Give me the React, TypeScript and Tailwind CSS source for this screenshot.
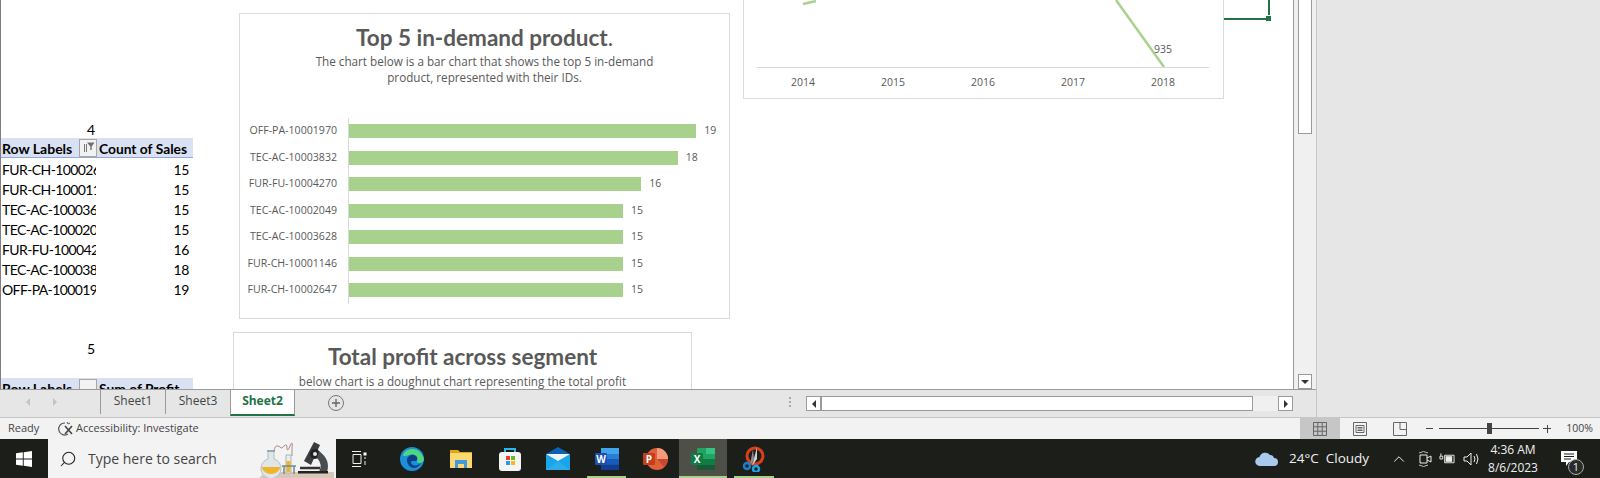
import { Search, ChevronUp } from "lucide-react";

const chartFont = "font-['Lato','Liberation_Sans',sans-serif]";
const uiFont = "font-['Open_Sans','Liberation_Sans',sans-serif]";

const pivotRows = [
  ["FUR-CH-10002647", 15],
  ["FUR-CH-10001146", 15],
  ["TEC-AC-10003628", 15],
  ["TEC-AC-10002049", 15],
  ["FUR-FU-10004270", 16],
  ["TEC-AC-10003832", 18],
  ["OFF-PA-10001970", 19],
] as const;

const barRows = [...pivotRows].reverse();

function FilterButton({ sorted }: { sorted?: boolean }) {
  return (
    <div className="w-[18px] h-[18px] shrink-0 border border-[#a6a6a6] bg-[#f2f2f2] flex items-center justify-center">
      {sorted && (
        <svg width="13" height="13" viewBox="0 0 13 13">
          <path d="M2.500 3v8M4.500 3v8" stroke="#777" strokeWidth="1" fill="none" />
          <path d="M5 1.500h7.500L9.700 5.500V9H8.300V5.500z" fill="#6f6f6f" />
        </svg>
      )}
    </div>
  );
}

function PivotHeader({ value, sorted }: { value: string; sorted?: boolean }) {
  return (
    <div className="flex w-[192px] h-5 items-center bg-[#d9e1f2] border-b border-[#8ea9db] text-[14px] font-bold text-black">
      <span className="w-[78px] pl-[1px] pt-[2px] whitespace-nowrap">Row Labels</span>
      <FilterButton sorted={sorted} />
      <span className="pl-[2px] pt-[2px] whitespace-nowrap text-[13.8px]">{value}</span>
    </div>
  );
}

function PivotTables() {
  return (
    <div className={`${chartFont} pt-[118px] text-[14px] text-black leading-5`}>
      <div className="w-[94px] h-5 pt-[2px] text-right">4</div>
      <PivotHeader value="Count of Sales" sorted />
      {pivotRows.map(([id, count]) => (
        <div key={id} className="flex w-[192px] h-5 pt-[4px] items-center">
          <span className="w-[95px] pl-[1px] overflow-hidden whitespace-nowrap tracking-[-0.6px]">{id}</span>
          <span className="flex-1 text-right pr-[4px] tracking-[-0.4px]">{count}</span>
        </div>
      ))}
      <div className="h-10" />
      <div className="w-[94px] h-5 pt-[1px] text-right">5</div>
      <div className="h-5" />
      <PivotHeader value="Sum of Profit" />
    </div>
  );
}

function BarCard() {
  return (
    <div className={`${chartFont} absolute left-[239px] top-[13px] w-[491px] h-[306px] border border-[#d9d9d9] bg-white text-[#595959] flex flex-col items-center`}>
      <h2 className="mt-[8px] text-[22.5px] leading-[32px] font-bold">
        Top 5 in-demand product<span className="font-normal">.</span>
      </h2>
      <p className={`${uiFont} text-[11.7px] leading-[16px] text-center w-[360px] -mt-[1px]`}>
        The chart below is a bar chart that shows the top 5 in-demand product, represented with their IDs.
      </p>
      <div className="mt-[33px] w-full flex flex-col">
        {barRows.map(([id, count]) => (
          <div key={id} className="flex h-[26.5px] items-center">
            <span className={`${uiFont} w-[97px] text-right text-[10.6px] whitespace-nowrap`}>{id}</span>
            <div className="ml-[11px] h-full border-l border-[#d9d9d9] flex items-center">
              <div className="h-[14px] bg-[#a9d18e]" style={{ width: `${count * 18.27}px` }} />
              <span className={`${uiFont} ml-[8px] text-[10.5px]`}>{count}</span>
            </div>
          </div>
        ))}
      </div>
    </div>
  );
}

function DoughnutCard() {
  return (
    <div className={`${chartFont} absolute left-[233px] top-[332px] w-[459px] h-[300px] border border-[#d9d9d9] bg-white text-[#595959] flex flex-col items-center`}>
      <h2 className="mt-[8px] text-[22.5px] leading-[32px] font-bold">Total profit across segment</h2>
      <p className={`${uiFont} text-[11.7px] leading-[16px]`}>below chart is a doughnut chart representing the total profit</p>
    </div>
  );
}

function LineCard() {
  return (
    <div className={`${uiFont} absolute left-[743px] top-[-2px] w-[481px] h-[101px] border border-[#d9d9d9] bg-white text-[#595959] text-[10.5px]`}>
      <svg className="absolute inset-0" width="479" height="99">
        <path d="M59 5 L72 2" stroke="#a9d18e" strokeWidth="2.5" fill="none" />
        <path d="M372 1 L420 68" stroke="#a9d18e" strokeWidth="2.5" fill="none" />
        <path d="M13 68.500 H465" stroke="#d9d9d9" strokeWidth="1" fill="none" />
      </svg>
      <span className="absolute left-[410px] top-[43px]">935</span>
      <div className="absolute left-[14px] top-[76px] w-[450px] grid grid-cols-5 text-center">
        {[2014, 2015, 2016, 2017, 2018].map((y) => (
          <span key={y}>{y}</span>
        ))}
      </div>
    </div>
  );
}

function CellSelection() {
  return (
    <>
      <div className="absolute left-[1224px] top-[18px] w-[42px] h-[2px] bg-[#217346]" />
      <div className="absolute left-[1268px] top-0 w-[2px] h-[15px] bg-[#217346]" />
      <div className="absolute left-[1266px] top-[16px] w-[5px] h-[5px] bg-[#217346]" />
    </>
  );
}

function VerticalScrollbar() {
  return (
    <div className="relative w-[23px] shrink-0 border-l border-[#9a9a9a] bg-[#f0f0f0] px-[4px] flex flex-col justify-between">
      <div className="h-[134px] border border-t-0 border-[#9a9a9a] bg-white" />
      <div className="h-[15px] border border-[#9a9a9a] bg-white flex items-center justify-center">
        <div className="w-0 h-0 border-x-[4px] border-x-transparent border-t-[4px] border-t-[#333]" />
      </div>
    </div>
  );
}

function TabStrip() {
  return (
    <div className={`${uiFont} h-[28px] border-t border-[#9a9a9a] bg-[#e6e6e6] flex text-[12px] text-[#444]`}>
      <div className="w-[100px] flex items-start pt-[8px] pl-[26px] gap-[23px] shrink-0">
        <span className="w-0 h-0 border-y-[4px] border-y-transparent border-r-[4px] border-r-[#c4c4c4]" />
        <span className="w-0 h-0 border-y-[4px] border-y-transparent border-l-[4px] border-l-[#c4c4c4]" />
      </div>
      <div className="w-[65px] h-[24px] border-l border-[#9a9a9a] text-center leading-[22px]">Sheet1</div>
      <div className="w-[65px] h-[24px] border-l border-[#9a9a9a] text-center leading-[22px]">Sheet3</div>
      <div className="w-[65px] h-[26px] bg-white border-x border-[#9a9a9a] border-b-2 border-b-[#217346] text-center leading-[22px] font-bold text-[#217346]">
        Sheet2
      </div>
      <div className="ml-[33px] mt-[5px] w-[16px] h-[16px] rounded-full border border-[#777] flex items-center justify-center">
        <svg width="10" height="10" viewBox="0 0 10 10">
          <path d="M5 1v8M1 5h8" stroke="#666" strokeWidth="1.4" />
        </svg>
      </div>
      <div className="ml-[445px] mt-[7px] flex flex-col gap-[2px]">
        <span className="w-[2px] h-[2px] bg-[#aaa]" />
        <span className="w-[2px] h-[2px] bg-[#aaa]" />
        <span className="w-[2px] h-[2px] bg-[#aaa]" />
      </div>
      <div className="ml-[15px] mt-[6px] h-[15px] w-[487px] flex bg-[#f0f0f0]">
        <div className="w-[15px] border border-[#9a9a9a] bg-white flex items-center justify-center">
          <div className="w-0 h-0 border-y-[4px] border-y-transparent border-r-[4px] border-r-[#333]" />
        </div>
        <div className="w-[432px] border border-[#9a9a9a] bg-white" />
        <div className="flex-1" />
        <div className="w-[15px] border border-[#9a9a9a] bg-white flex items-center justify-center">
          <div className="w-0 h-0 border-y-[4px] border-y-transparent border-l-[4px] border-l-[#333]" />
        </div>
      </div>
    </div>
  );
}

function StatusBar() {
  return (
    <div className={`${uiFont} h-[22px] border-t border-[#c6c6c6] bg-[#f2f2f2] flex items-center text-[11px] text-[#444] shrink-0`}>
      <span className="ml-[8px] w-[49px]">Ready</span>
      <svg width="17" height="16" viewBox="0 0 17 16" className="shrink-0">
        <path d="M8 2a6 6 0 1 0 3 11" stroke="#555" strokeWidth="1.2" fill="none" />
        <path d="M8 5l7 8M15 5l-7 8" stroke="#444" strokeWidth="1.6" />
        <path d="M10 1l1 2 2-1" stroke="#555" strokeWidth="1" fill="none" />
      </svg>
      <span className="ml-[2px]">Accessibility: Investigate</span>
      <div className="ml-auto h-full w-[40px] bg-[#c6c6c6] flex items-center justify-center">
        <svg width="14" height="14" viewBox="0 0 14 14">
          <path d="M.5.5h13v13H.5zM.5 4.800h13M.5 9.200h13M4.800.5v13M9.200.5v13" stroke="#666" fill="none" />
        </svg>
      </div>
      <div className="w-[40px] flex justify-center">
        <svg width="14" height="14" viewBox="0 0 14 14">
          <path d="M.5.5h13v13H.5zM3 3.500h8v7H3zM4.500 5.500h5M4.500 7h5M4.500 8.500h5" stroke="#666" fill="none" />
        </svg>
      </div>
      <div className="w-[40px] flex justify-center">
        <svg width="14" height="14" viewBox="0 0 14 14">
          <path d="M.5.5h13v13H.5zM7 .5v7h6.500" stroke="#666" fill="none" />
        </svg>
      </div>
      <div className="ml-[6px] w-[7px] h-[1px] bg-[#444]" />
      <div className="relative ml-[6px] w-[100px] h-[1px] bg-[#444] flex justify-center items-center">
        <div className="w-[5px] h-[11px] bg-[#444]" />
      </div>
      <div className="relative ml-[4px] w-[8px] h-[8px] flex items-center justify-center">
        <div className="absolute w-[8px] h-[1px] bg-[#444]" />
        <div className="absolute w-[1px] h-[8px] bg-[#444]" />
      </div>
      <span className="ml-[14px] mr-[7px] w-[28px] text-right text-[10.5px]">100%</span>
    </div>
  );
}

function SearchArt() {
  return (
    <svg width="76" height="39" viewBox="0 0 76 39" className="shrink-0">
      <path d="M1 39 L8 33 H76 V39z" fill="#d8c6b6" />
      <path d="M16 12v8a10 10 0 1 1-6 0v-8z" fill="#dfe6ea" stroke="#b4bec3" />
      <path d="M3.500 28h19a10 10 0 0 1-19 0z" fill="#f0b429" />
      <path d="M9 12h8" stroke="#8b98a0" strokeWidth="1.500" />
      <path d="M16 12q1-6 4-5t3 2 3-2 3 2 3-2 2 2v8" stroke="#a98d86" strokeWidth="1" fill="none" />
      <path d="M28 16h5v18h-5z" fill="#e8edef" stroke="#a9b5ba" />
      <path d="M28.500 22h4v11h-4z" fill="#efb62d" />
      <path d="M24 27h14M26 27v8M36 27v8" stroke="#6f8a90" strokeWidth="1.500" />
      <path d="M56 3 L62 6 L53 26 L46 22z" fill="#3a3d40" />
      <circle cx="57" cy="15" r="5" fill="#222" />
      <circle cx="57" cy="15" r="2" fill="#e5e5e5" />
      <path d="M61 12q12 9 8 21h-8q4-8-2-14z" fill="#4a4d50" />
      <path d="M42 29h20" stroke="#333" strokeWidth="2.500" />
      <path d="M40 32h30v2.500H40z" fill="#222" />
    </svg>
  );
}

function EdgeIcon() {
  return (
    <svg width="24" height="24" viewBox="0 0 24 24">
      <circle cx="12" cy="12" r="12" fill="#1b8fd8" />
      <path d="M3 8C6 0 20-1 24 12c0 4-5 5-7 3 2-6-4-9-8-7-3 1-5 2-6 0z" fill="#4fd67f" />
      <path d="M8 17c-3-5 1-10 6-9 4 1 4 5 2 6h-4c-2 0-1 3 1 4 3 1 5 0 8-2-3 6-10 7-13 1z" fill="#0c3f86" />
    </svg>
  );
}

function FolderIcon() {
  return (
    <svg width="22" height="20" viewBox="0 0 22 20">
      <path d="M0 1h8l2 2h12v16H0z" fill="#e0a80c" />
      <path d="M0 4h22v15H0z" fill="#fbd872" />
      <path d="M5 11h12v8h-3v-4H8v4H5z" fill="#3f9bdc" />
    </svg>
  );
}

function StoreIcon() {
  return (
    <svg width="24" height="24" viewBox="0 0 24 24">
      <path d="M7 6V2h10v4" stroke="#29b6e8" strokeWidth="2" fill="none" />
      <rect x="1" y="5" width="22" height="19" rx="3" fill="#f4f4f4" />
      <rect x="8" y="9" width="4" height="4" fill="#e8412b" />
      <rect x="13" y="9" width="4" height="4" fill="#6fb52c" />
      <rect x="8" y="14" width="4" height="4" fill="#1ca0e6" />
      <rect x="13" y="14" width="4" height="4" fill="#fdb813" />
    </svg>
  );
}

function MailIcon() {
  return (
    <svg width="24" height="23" viewBox="0 0 24 23">
      <path d="M0 7 12 0l12 7v16H0z" fill="#0c63b4" />
      <path d="M0 8h24v15H0z" fill="#1ba4e8" />
      <path d="M0 7h24L12 14z" fill="#eef6fb" />
      <path d="M12 14 24 23H0z" fill="#34b5f0" opacity="0.6" />
    </svg>
  );
}

function WordIcon() {
  return (
    <svg width="24" height="22" viewBox="0 0 24 22">
      <rect x="6" y="0" width="18" height="22" rx="1" fill="#2b7cd3" />
      <rect x="6" y="0" width="18" height="6" fill="#41a5ee" />
      <rect x="6" y="11" width="18" height="5.5" fill="#185abd" />
      <rect x="6" y="16.500" width="18" height="5.5" fill="#103f91" />
      <rect x="0" y="5" width="12" height="12" rx="1" fill="#1a50b0" />
      <text x="6" y="15" textAnchor="middle" fontSize="10" fontWeight="700" fill="#fff" fontFamily="Open Sans">W</text>
    </svg>
  );
}

function PowerPointIcon() {
  return (
    <svg width="25" height="22" viewBox="0 0 25 22">
      <circle cx="14" cy="11" r="11" fill="#e0603c" />
      <path d="M14 0a11 11 0 0 1 11 11H14z" fill="#f59a7a" />
      <path d="M14 11h11a11 11 0 0 1-4 8z" fill="#c9482a" />
      <rect x="0" y="5" width="12" height="12" rx="1" fill="#c43e1c" />
      <text x="6" y="15" textAnchor="middle" fontSize="10" fontWeight="700" fill="#fff" fontFamily="Open Sans">P</text>
    </svg>
  );
}

function ExcelIcon() {
  return (
    <svg width="24" height="22" viewBox="0 0 24 22">
      <rect x="6" y="0" width="18" height="22" rx="1" fill="#21a366" />
      <rect x="15" y="0" width="9" height="6" fill="#33c481" />
      <rect x="6" y="11" width="18" height="5.500" fill="#107c41" />
      <rect x="6" y="16.500" width="18" height="5.500" fill="#185c37" />
      <rect x="0" y="5" width="12" height="12" rx="1" fill="#107c41" />
      <text x="6" y="15" textAnchor="middle" fontSize="10" fontWeight="700" fill="#fff" fontFamily="Open Sans">X</text>
    </svg>
  );
}

function SnipIcon() {
  return (
    <svg width="24" height="26" viewBox="0 0 24 26">
      <circle cx="13" cy="10" r="8" stroke="#d8401c" strokeWidth="3" fill="none" />
      <path d="M15 1 L15 13 L10 20z" fill="#d0d0d0" />
      <path d="M11 3 L12 14 L8 19z" fill="#8f8f8f" />
      <circle cx="5" cy="20" r="3" stroke="#1b7fd0" strokeWidth="2.500" fill="none" />
      <circle cx="14" cy="23" r="3" stroke="#1ba4e8" strokeWidth="2.500" fill="none" />
    </svg>
  );
}

function TaskItem({ active, running, width, children }: { active?: boolean; running?: boolean; width: string; children: React.ReactNode }) {
  return (
    <div className={`relative h-full flex items-center justify-center shrink-0 ${width} ${active ? "bg-[#4e5048]" : ""}`}>
      {children}
      {running && <div className={`absolute bottom-0 h-[2px] bg-[#a9cf8a] ${active ? "left-0 right-0" : "left-[5px] right-[5px]"}`} />}
    </div>
  );
}

function Taskbar() {
  return (
    <div className={`${uiFont} h-[39px] bg-[#1c1e1a] flex items-center text-[#f0f0f0] shrink-0`}>
      <div className="w-[48px] h-full flex items-center justify-center shrink-0">
        <svg width="16" height="16" viewBox="0 0 16 16">
          <path d="M0 2.300 6.800 1.300V7.600H0zM7.700 1.200 16 0V7.600H7.700zM0 8.400h6.800v6.300L0 13.700zM7.700 8.400H16V16l-8.300-1.200z" fill="#fff" />
        </svg>
      </div>
      <div className="w-[288px] h-full bg-[#f3f3f3] flex items-center overflow-hidden shrink-0">
        <Search className="ml-[11px] w-[18px] h-[18px] text-[#222] -scale-x-100 shrink-0" strokeWidth={1.400} />
        <span className="ml-[11px] text-[14px] text-[#444] whitespace-nowrap w-[170px] shrink-0">Type here to search</span>
        <SearchArt />
      </div>
      <div className="ml-[14px] w-[20px] h-[18px] flex items-center shrink-0">
        <svg width="18" height="16" viewBox="0 0 18 16">
          <path d="M2 .5h9M2 15.500h9M3 3.500h8v9H3zM15 6v2M15 10v4" stroke="#f0f0f0" strokeWidth="1" fill="none" />
          <rect x="13.500" y="1.500" width="3" height="3" fill="#fff" />
        </svg>
      </div>
      <div className="ml-[18px] h-full flex items-center shrink-0">
        <TaskItem width="w-[48px]"><EdgeIcon /></TaskItem>
        <TaskItem width="w-[50px]"><FolderIcon /></TaskItem>
        <TaskItem width="w-[48px]"><StoreIcon /></TaskItem>
        <TaskItem width="w-[48px]"><MailIcon /></TaskItem>
        <TaskItem width="w-[49px]" running><WordIcon /></TaskItem>
        <TaskItem width="w-[48px]"><PowerPointIcon /></TaskItem>
        <TaskItem width="w-[48px]" active running><ExcelIcon /></TaskItem>
        <div className="w-[2px] shrink-0" />
        <TaskItem width="w-[50px]" running><SnipIcon /></TaskItem>
      </div>
      <div className="ml-[476px] w-[24px] shrink-0 flex">
        <svg width="24" height="15" viewBox="0 0 24 15">
          <path d="M5 15a4.500 4.500 0 0 1-.5-9A6 6 0 0 1 15 4a4 4 0 0 1 4 3 4 4 0 0 1 0 8z" fill="#a9c9ee" />
        </svg>
      </div>
      <span className="ml-[10px] text-[13.5px] whitespace-nowrap w-[84px] shrink-0">24°C&nbsp; Cloudy</span>
      <ChevronUp className="ml-[17px] w-[18px] h-[18px] shrink-0" strokeWidth={1.300} />
      <div className="ml-[9px] w-[16px] shrink-0 flex">
        <svg width="16" height="18" viewBox="0 0 16 18">
          <path d="M3 5h7v8H3zM10 8l4-2v6l-4-2" stroke="#eee" strokeWidth="1" fill="none" />
          <path d="M2 3q4.500-3 9 0M2 15q4.500 3 9 0" stroke="#bbb" strokeWidth="1" fill="none" />
        </svg>
      </div>
      <div className="ml-[6px] w-[16px] shrink-0 flex">
        <svg width="17" height="12" viewBox="0 0 17 12">
          <path d="M1 3h3v3H1zM2 0v3M6 2h10v8H6z" stroke="#eee" strokeWidth="1" fill="none" />
          <rect x="7" y="3" width="7" height="6" fill="#eee" />
        </svg>
      </div>
      <div className="ml-[8px] w-[18px] shrink-0 flex">
        <svg width="17" height="14" viewBox="0 0 17 14">
          <path d="M1 5h3l4-4v12L4 9H1zM11 4q2 3 0 6M13.500 2q3 5 0 10" stroke="#eee" strokeWidth="1" fill="none" />
        </svg>
      </div>
      <div className="ml-[1px] w-[62px] text-center text-[12px] leading-[18px] shrink-0">
        <div>4:36 AM</div>
        <div>8/6/2023</div>
      </div>
      <div className="relative ml-[17px] w-[24px] h-[24px] shrink-0">
        <svg width="18" height="16" viewBox="0 0 18 16" className="absolute left-0 top-[4px]">
          <path d="M0 0h16v11H8l-3 4v-4H0z" fill="#fff" />
          <path d="M3 3h10M3 5.500h10M3 8h7" stroke="#1c1e1a" strokeWidth="1" />
        </svg>
        <div className="absolute left-[7px] top-[12px] w-[16px] h-[16px] rounded-full bg-[#2a2a2a] border border-[#aaa] text-[11px] leading-[14px] text-center">1</div>
      </div>
    </div>
  );
}

export default function App() {
  return (
    <div className="w-[1600px] h-[478px] overflow-hidden flex flex-col bg-white">
      <div className="flex-1 min-h-0 flex">
        <div className="w-[1316px] shrink-0 flex flex-col">
          <div className="flex-1 min-h-0 flex">
            <div className="relative flex-1 overflow-hidden border-l border-[#7f7f7f] bg-white">
              <PivotTables />
              <div className="absolute inset-0 -left-[1px]">
                <BarCard />
                <DoughnutCard />
                <LineCard />
                <CellSelection />
              </div>
            </div>
            <VerticalScrollbar />
          </div>
          <TabStrip />
        </div>
        <div className="flex-1 bg-[#e6e6e6] border-l border-[#c6c6c6]" />
      </div>
      <StatusBar />
      <Taskbar />
    </div>
  );
}
